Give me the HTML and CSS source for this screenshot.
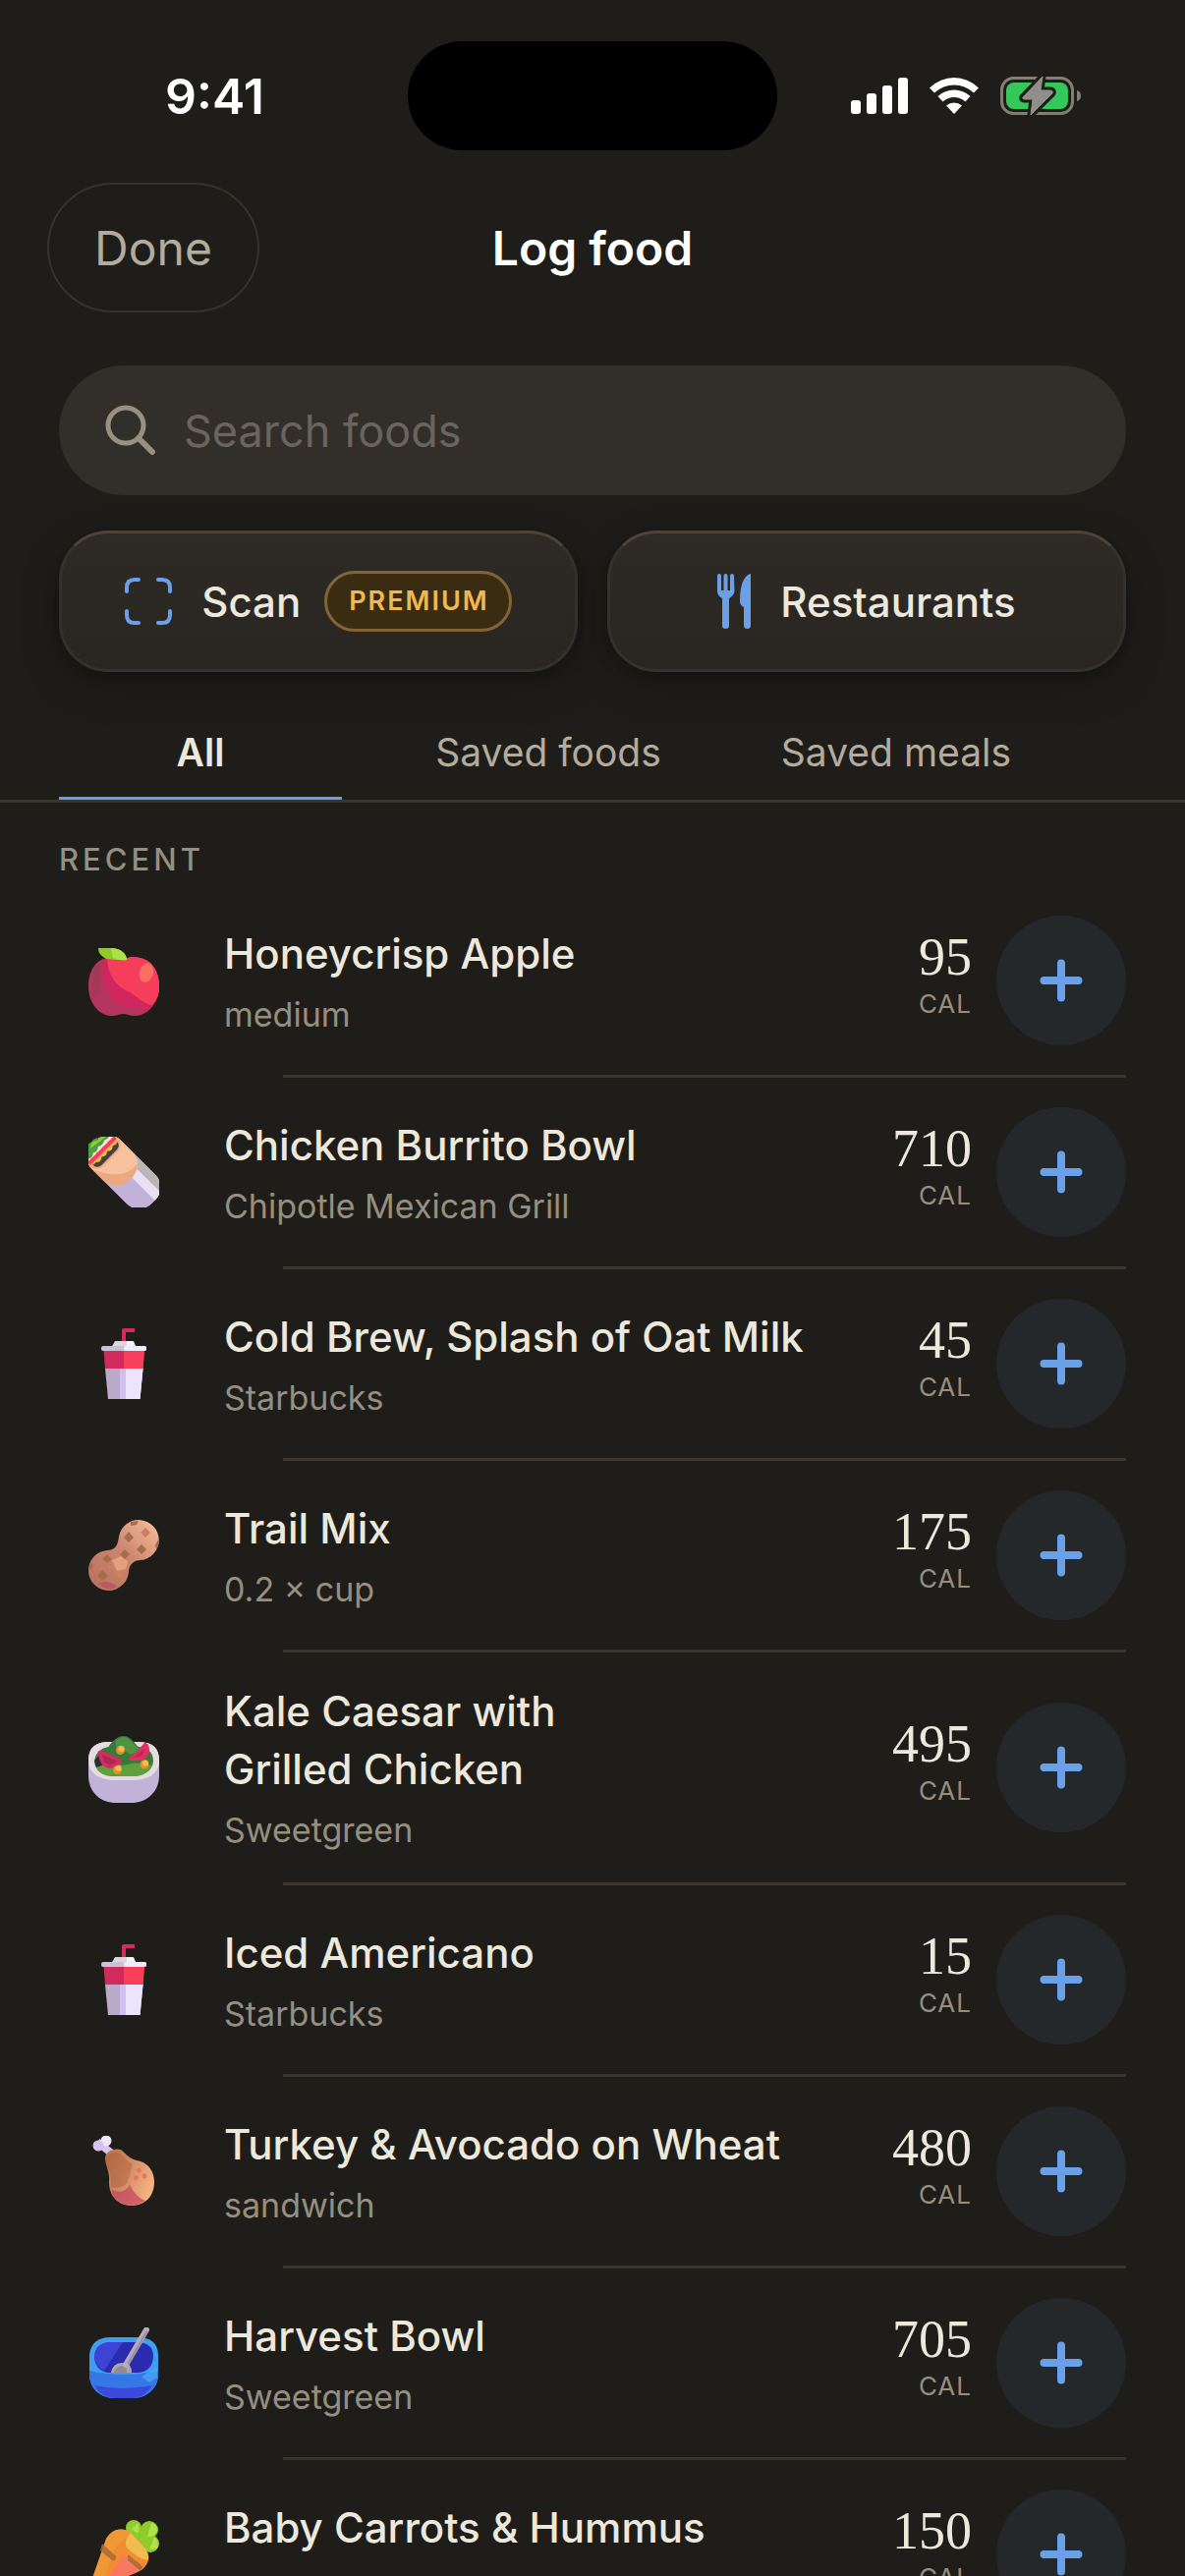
FILE: index.html
```
<!DOCTYPE html>
<html lang="en">
  <head>
    <meta charset="UTF-8" />
    <meta name="viewport" content="width=device-width, initial-scale=1.0" />
    <title>Log food</title>
    <link rel="stylesheet" href="styles.css">
  </head>

  <body>
    <!-- Shared icons -->
    <svg class="sprite" aria-hidden="true">
      <symbol id="plus" viewBox="0 0 44 44">
        <path d="M22 4.500v35M4.500 22h35" stroke="#6aa0e8" stroke-width="8" stroke-linecap="round" />
      </symbol>

      <symbol id="apple" viewBox="0 0 72 72">
        <path d="M36 14C44 11 54 12 60 16C68 21 72 31 72 42C72 58 61 72 47 72C42 72 39 70 36 70C32 70 29 72 24 72C10 72 0 58 0 42C0 25 9 13 21 13C27 13 31 14 36 14Z" fill="#b23560" />
        <path d="M17 14C24 12 30 14 36 14C44 11 54 12 60 16C68 21 72 31 72 42C72 54 66 64 58 66C46 63 34 66 25 56C16 46 11 26 17 14Z" fill="#cf265d" />
        <path d="M19 14C25 13 31 14 36 14C44 11 54 12 60 16C68 21 72 31 72 42C72 51 69 58 64 61C56 60 47 50 38 46C27 41 20 29 19 14Z" fill="#f63e5c" />
        <ellipse cx="59" cy="28" rx="7" ry="10" transform="rotate(15 59 28)" fill="#f96f61" />
        <path d="M8 20C3 30 2 44 6 54C12 52 15 34 12 18Z" fill="#a03a52" opacity=".7" />
        <path d="M10 3H23C32 3 39 8 39 15C31 16 24 14 18 14C13 11 10 8 10 3Z" fill="#91cc26" />
        <path d="M23 3C32 3 39 8 39 15C33 16 28 14 25 13Z" fill="#ace246" />
      </symbol>

      <symbol id="burrito" viewBox="0 0 72 72">
        <clipPath id="burrito-wrap">
          <rect x="15" y="-7" width="42" height="86" rx="19" />
        </clipPath>
        <g transform="rotate(-45 36 36)">
          <g clip-path="url(#burrito-wrap)">
            <rect x="15" y="-7" width="42" height="86" fill="#c2b1d8" />
            <rect x="38" y="20" width="10" height="60" fill="#e8e1f4" />
            <rect x="48" y="20" width="9" height="60" fill="#b9b6b4" />
            <path d="M15 -7H57V28Q54 46 36 46Q18 46 15 28Z" fill="#f7c29d" />
            <path d="M15 10V28Q18 46 36 46Q46 46 51 40Q28 42 15 10Z" fill="#e9aa82" />
            <rect x="15" y="-7" width="42" height="24" rx="12" fill="#eea982" />
            <rect x="19" y="4" width="34" height="11" rx="6" fill="#45413b" />
            <path d="M17 5H55V8Q51 12 47 9Q43 13 39 9Q35 13 31 9Q27 13 23 9Q19 10 17 5Z" fill="#f5b94e" />
            <path d="M18 -2H54V2Q51 5 47 2Q43 5 39 2Q35 5 31 2Q27 5 23 2Q19 4 18 -2Z" fill="#f2e9dd" />
            <rect x="17" y="3" width="38" height="4" rx="1" fill="#f5405a" />
          </g>
          <path d="M19 0Q18 -5 24 -6Q27 -11 34 -9Q41 -10 42 -6Q49 -6 53 -2Q49 2 45 -1Q40 2 36 -1Q31 3 28 0Q23 4 19 0Z" fill="#509d46" />
          <path d="M29 -5Q35 -11 39 -6Q46 -6 51 -2Q42 -3 36 -4Z" fill="#8bd02e" />
        </g>
      </symbol>

      <symbol id="cup" viewBox="0 0 72 72">
        <path d="M36 15V2H47" fill="none" stroke="#d52b5f" stroke-width="4" stroke-linejoin="round" />
        <path d="M27 13H46L49 20H23Z" fill="#dcd7df" />
        <path d="M39 13H45L48 20H39Z" fill="#f5f2fa" />
        <rect x="13" y="18" width="46" height="5" rx="2" fill="#c9c1d4" />
        <rect x="36" y="18" width="23" height="5" rx="2" fill="#f0ebf9" />
        <path d="M15.500 23H57L55.500 41H17Z" fill="#d02b5c" />
        <path d="M36 23H57L55.500 41H36Z" fill="#f73f5b" />
        <path d="M17 41H55.500L52.500 72H20Z" fill="#b9abc9" />
        <path d="M32 41H55.500L52.500 72H32Z" fill="#d2bfee" />
        <path d="M38 41H55.500L52.500 72H38Z" fill="#ece4fa" />
      </symbol>

      <symbol id="peanut" viewBox="0 0 72 72">
        <linearGradient id="peanut-shell" x1="0" y1="1" x2="1" y2="0">
          <stop offset="0" stop-color="#b56f5b" />
          <stop offset=".55" stop-color="#cf8872" />
          <stop offset="1" stop-color="#f8c199" />
        </linearGradient>
        <path d="M31 17A20.500 20.500 0 1 1 53 41C46 41 42 45 41 52A20.500 20.500 0 1 1 19 31C27 31 30 26 31 17Z" fill="url(#peanut-shell)" />
        <path d="M24 41L33 37L40 42L38 50L29 52Z" fill="#e9a981" opacity=".8" />
        <g fill="#a66c4b">
          <path d="M41 12l5 6-5 5-5-5z" />
          <path d="M54 25l5 5-5 5-5-5z" />
          <path d="M37 30l5 5-5 5-5-5z" />
          <path d="M19 35l5 5-5 4-5-4z" />
          <path d="M14 51l6 6-6 5-5-5z" />
          <path d="M43 2l8-1-2 4-6 1z" />
          <path d="M71 20l1 4-3 6-1-4z" />
          <path d="M2 44l3 2-2 5-2-1z" />
        </g>
        <path d="M58 8l5 5-5 5-5-5z" fill="#cb7f68" />
        <path d="M31 52l4 3-4 4-3-4z" fill="#cf8848" />
        <path d="M10 65Q20 60 29 68Q20 74 10 65Z" fill="#b94e66" opacity=".7" />
      </symbol>

      <symbol id="salad" viewBox="0 0 72 72">
        <path d="M0 29C0 14 9 10 22 10H50C64 10 72 15 72 29V44C72 62 58 72 44 72H28C13 72 0 62 0 44Z" fill="#c2b2d9" />
        <path d="M0 29C0 14 9 10 22 10H50C64 10 72 15 72 29C72 44 58 49 45 49H27C13 49 0 43 0 29Z" fill="#e3ddde" />
        <path d="M6 30C7 19 15 15 24 15H48C59 15 66 19 66 30C65 40 55 45 45 45H27C15 45 7 40 6 30Z" fill="#3f7a38" />
        <path d="M6 29L12 22L14 34L8 36Z" fill="#272d3c" />
        <path d="M8 36C23 30 50 30 65 34C61 42 53 45 45 45H27C17 45 11 42 8 36Z" fill="#609f3d" />
        <path d="M13 22C21 18 24 4 36 4C45 4 49 17 58 20L50 31L35 34L22 28Z" fill="#39793a" />
        <path d="M28 9Q36 1 43 9Q50 16 54 19L42 23Q35 16 28 15Z" fill="#509443" />
        <path d="M10 22Q9 18 14 19L32 27Q37 31 31 33Q24 40 16 35Q11 31 10 22Z" fill="#d62a60" />
        <path d="M14 23L30 30Q23 36 17 31Q14 28 14 23Z" fill="#ae2856" />
        <path d="M41 27Q44 23 49 20L57 11Q61 10 62 17Q62 28 50 29Q42 30 41 27Z" fill="#e42d61" />
        <path d="M46 26L57 17Q57 26 46 26Z" fill="#b92959" />
        <g fill="#df9030">
          <circle cx="32.500" cy="18.500" r="4.500" />
          <circle cx="29.500" cy="38.500" r="4.500" />
          <circle cx="57" cy="33" r="4.500" />
        </g>
        <g fill="#f5bd4c">
          <circle cx="33.500" cy="17" r="3" />
          <circle cx="30.500" cy="37" r="3" />
          <circle cx="58" cy="31.500" r="3" />
        </g>
      </symbol>

      <symbol id="drumstick" viewBox="0 0 72 72">
        <linearGradient id="drumstick-meat" x1="0" y1="0" x2="1" y2=".5">
          <stop offset="0" stop-color="#b87048" />
          <stop offset=".45" stop-color="#cf8560" />
          <stop offset="1" stop-color="#f3b080" />
        </linearGradient>
        <path d="M9 6L14 10L25 19" fill="none" stroke="#d8c7ec" stroke-width="8" />
        <circle cx="18" cy="5" r="5.500" fill="#eee7f7" />
        <circle cx="10" cy="10" r="5.500" fill="#d6c2ed" />
        <path d="M17 23C17 16 26 12 33 14C39 19 42 24 53 26C62 29 67 37 67 47C67 62 57 71 44 71C30 71 21 61 21 47C22 37 18 33 17 23Z" fill="url(#drumstick-meat)" />
        <path d="M23 55Q36 60 42 50Q48 62 58 66Q44 75 31 67Q25 62 23 55Z" fill="#c23c60" opacity=".65" />
        <path d="M18 22Q24 15 32 18Q39 25 45 29L40 47Q34 55 23 52Q24 37 19 31Z" fill="#a55c35" opacity=".4" />
        <g fill="#e6785f">
          <circle cx="51.500" cy="35" r="2.500" />
          <circle cx="57" cy="41" r="2.500" />
          <circle cx="48.500" cy="42.500" r="2.500" />
        </g>
      </symbol>

      <symbol id="bowl" viewBox="0 0 72 72">
        <path d="M1 28C2 16 10 10 22 10H50C63 10 71 16 71 28V48C71 62 59 72 45 72H27C13 72 1 63 1 48Z" fill="#3e9ff0" />
        <path d="M1 44Q35 52 71 44V48C71 62 59 72 45 72H27C13 72 1 63 1 48Z" fill="#3477e5" />
        <path d="M6 59Q33 65 65 59C59 68 53 72 45 72H27C18 72 11 67 6 59Z" fill="#3c4adb" />
        <path d="M6 29C7 20 13 15 23 15H49C60 15 66 20 66 29C66 39 60 46 50 46H22C11 46 6 38 6 29Z" fill="#2b2baf" />
        <path d="M6 29C7 20 13 15 23 15H35L16 44Q6 39 6 29Z" fill="#3c43d5" />
        <path d="M23 46Q25 35 36 36Q44 36 44 46Z" fill="#aaa5b0" />
        <path d="M26 46Q28 39 35 39Q40 40 39 46Z" fill="#8f8b91" />
        <path d="M38 38L59 2.500" stroke="#b7abbd" stroke-width="6" stroke-linecap="round" />
        <path d="M40 37L60 3.500" stroke="#968f98" stroke-width="2" />
        <path d="M54 50Q64 44 70 41V51L62 56Z" fill="#48aef8" opacity=".7" />
      </symbol>

      <symbol id="carrot" viewBox="0 0 72 72">
        <g fill="#91ca2d">
          <circle cx="46" cy="9" r="8" />
          <circle cx="62" cy="11" r="9" />
          <circle cx="63" cy="25" r="9" />
          <path d="M42 15L56 6L66 22L59 33Z" />
        </g>
        <path d="M51 4Q52 10 50 15L44 10Z M64 4Q70 5 70 12Q67 19 60 18Z M67 18Q72 23 70 30L62 31Z" fill="#ade248" />
        <path d="M17 23C21 11 34 7 43 14L58 30C65 39 60 50 50 54L7 72H0Z" fill="#f28c31" />
        <path d="M17 23C21 11 34 7 43 14L28 28L12 71L0 72Z" fill="#ef9835" />
        <path d="M43 14L58 30Q61 35 61 42Q49 40 38 28Q37 20 43 14Z" fill="#f0bc52" />
        <path d="M36 36Q49 48 58 47Q53 53 45 56L9 71Q26 52 36 36Z" fill="#fa7862" />
        <path d="M14 25L28 38Q29 43 24 42L12 32ZM40 36L54 47Q56 51 52 52L40 42Z" fill="#a76a38" opacity=".85" />
      </symbol>
    </svg>

    <div class="app">
      <div class="status-bar">
        <div class="status-time">9:41</div>
        <div class="island"></div>
        <div class="status-icons">
          <svg width="58" height="37" viewBox="0 0 58 37" fill="#fff" role="img" aria-label="Signal">
            <rect x="0" y="23" width="10" height="14" rx="3" />
            <rect x="16" y="16" width="10" height="21" rx="3" />
            <rect x="32" y="8" width="10" height="29" rx="3" />
            <rect x="48" y="0" width="10" height="37" rx="3" />
          </svg>
          <svg width="50" height="37" viewBox="0 0 50 37" fill="#fff" role="img" aria-label="Wi-Fi">
            <path d="M0 10.500Q11 0 25 0T50 10.500L45 15.500Q36 7.500 25 7.500T5 15.500Z" />
            <path d="M8.500 19Q15.500 12.500 25 12.500T41.500 19L36.500 24.500Q31.500 20 25 20T13.500 24.500Z" />
            <path d="M17 28.500Q20.500 25.500 25 25.500T33 28.500L25 37Z" />
          </svg>
          <svg width="82" height="43" viewBox="0 -2 82 43" role="img" aria-label="Battery charging">
            <rect x="1.500" y="1.500" width="72" height="36" rx="12" fill="none" stroke="#847d76" stroke-width="3" />
            <path d="M78 14Q82 15 82 19.500T78 25Z" fill="#847d76" />
            <rect x="6" y="6" width="63" height="27" rx="8" fill="#34c759" />
            <path d="M43 0L23 21Q22 23 25 23H33L31 39L53 17Q54 14 51 14H41Z" fill="#8f8e8b" stroke="#1e1d19" stroke-width="7" stroke-linejoin="round" />
            <path d="M43 0L23 21Q22 23 25 23H33L31 39L53 17Q54 14 51 14H41Z" fill="#8f8e8b" stroke="#8f8e8b" stroke-width="1" stroke-linejoin="round" />
          </svg>
        </div>
      </div>

      <header class="header">
        <button class="done" type="button">Done</button>
        <h1>Log food</h1>
      </header>

      <label class="search">
        <svg width="52" height="52" viewBox="0 0 52 52" fill="none" stroke="#989080" stroke-width="5" stroke-linecap="round" aria-hidden="true">
          <circle cx="21" cy="21" r="18" />
          <path d="M34 34L48 48" stroke-width="6" />
        </svg>
        <input type="text" placeholder="Search foods" aria-label="Search foods" />
      </label>

      <div class="actions">
        <button class="action" type="button">
          <svg width="48" height="48" viewBox="0 0 48 48" fill="none" stroke="#6aa0e8" stroke-width="4" stroke-linecap="round" aria-hidden="true">
            <path d="M2 14V10Q2 2 10 2H14M34 2H38Q46 2 46 10V14M46 34V38Q46 46 38 46H34M14 46H10Q2 46 2 38V34" />
          </svg>
          Scan
          <span class="premium">PREMIUM</span>
        </button>
        <button class="action" type="button">
          <svg width="34" height="56" viewBox="0 0 34 56" fill="#6aa0e8" aria-hidden="true">
            <path d="M0 2Q0 0 2 0T4 2V17H6.500V2Q6.500 0 8.500 0T10.500 2V17H13V2Q13 0 15 0T17 2L17.500 18Q17 22 12 25V53Q12 56 8.500 56T5 53V25Q0 22 0 18Z" />
            <path d="M34 0V53Q34 56 30.500 56T27 53V34Q23 32 23 28Q23 3 34 0Z" />
          </svg>
          Restaurants
        </button>
      </div>

      <nav class="tabs" role="tablist">
        <button class="tab active" type="button" role="tab" aria-selected="true">All</button>
        <button class="tab" type="button" role="tab" aria-selected="false">Saved foods</button>
        <button class="tab" type="button" role="tab" aria-selected="false">Saved meals</button>
      </nav>

      <main class="content">
        <h2>RECENT</h2>
        <ul class="foods">
          <li>
            <div class="food">
              <svg class="food-icon"><use href="#apple" /></svg>
              <div class="food-text">
                <div class="food-name">Honeycrisp Apple</div>
                <div class="food-note">medium</div>
              </div>
              <div class="cal"><b>95</b><span>CAL</span></div>
              <button class="add" type="button" aria-label="Add Honeycrisp Apple"><svg><use href="#plus" /></svg></button>
            </div>
          </li>
          <li>
            <div class="food">
              <svg class="food-icon"><use href="#burrito" /></svg>
              <div class="food-text">
                <div class="food-name">Chicken Burrito Bowl</div>
                <div class="food-note">Chipotle Mexican Grill</div>
              </div>
              <div class="cal"><b>710</b><span>CAL</span></div>
              <button class="add" type="button" aria-label="Add Chicken Burrito Bowl"><svg><use href="#plus" /></svg></button>
            </div>
          </li>
          <li>
            <div class="food">
              <svg class="food-icon"><use href="#cup" /></svg>
              <div class="food-text">
                <div class="food-name">Cold Brew, Splash of Oat Milk</div>
                <div class="food-note">Starbucks</div>
              </div>
              <div class="cal"><b>45</b><span>CAL</span></div>
              <button class="add" type="button" aria-label="Add Cold Brew"><svg><use href="#plus" /></svg></button>
            </div>
          </li>
          <li>
            <div class="food">
              <svg class="food-icon"><use href="#peanut" /></svg>
              <div class="food-text">
                <div class="food-name">Trail Mix</div>
                <div class="food-note">0.2 × cup</div>
              </div>
              <div class="cal"><b>175</b><span>CAL</span></div>
              <button class="add" type="button" aria-label="Add Trail Mix"><svg><use href="#plus" /></svg></button>
            </div>
          </li>
          <li>
            <div class="food">
              <svg class="food-icon"><use href="#salad" /></svg>
              <div class="food-text">
                <div class="food-name">Kale Caesar with<br />Grilled Chicken</div>
                <div class="food-note">Sweetgreen</div>
              </div>
              <div class="cal"><b>495</b><span>CAL</span></div>
              <button class="add" type="button" aria-label="Add Kale Caesar with Grilled Chicken"><svg><use href="#plus" /></svg></button>
            </div>
          </li>
          <li>
            <div class="food">
              <svg class="food-icon"><use href="#cup" /></svg>
              <div class="food-text">
                <div class="food-name">Iced Americano</div>
                <div class="food-note">Starbucks</div>
              </div>
              <div class="cal"><b>15</b><span>CAL</span></div>
              <button class="add" type="button" aria-label="Add Iced Americano"><svg><use href="#plus" /></svg></button>
            </div>
          </li>
          <li>
            <div class="food">
              <svg class="food-icon"><use href="#drumstick" /></svg>
              <div class="food-text">
                <div class="food-name">Turkey &amp; Avocado on Wheat</div>
                <div class="food-note">sandwich</div>
              </div>
              <div class="cal"><b>480</b><span>CAL</span></div>
              <button class="add" type="button" aria-label="Add Turkey &amp; Avocado on Wheat"><svg><use href="#plus" /></svg></button>
            </div>
          </li>
          <li>
            <div class="food">
              <svg class="food-icon"><use href="#bowl" /></svg>
              <div class="food-text">
                <div class="food-name">Harvest Bowl</div>
                <div class="food-note">Sweetgreen</div>
              </div>
              <div class="cal"><b>705</b><span>CAL</span></div>
              <button class="add" type="button" aria-label="Add Harvest Bowl"><svg><use href="#plus" /></svg></button>
            </div>
          </li>
          <li>
            <div class="food">
              <svg class="food-icon"><use href="#carrot" /></svg>
              <div class="food-text">
                <div class="food-name">Baby Carrots &amp; Hummus</div>
                <div class="food-note">&nbsp;</div>
              </div>
              <div class="cal"><b>150</b><span>CAL</span></div>
              <button class="add" type="button" aria-label="Add Baby Carrots &amp; Hummus"><svg><use href="#plus" /></svg></button>
            </div>
          </li>
        </ul>
      </main>
    </div>
  </body>
</html>
```
FILE: styles.css
```
* {
  box-sizing: border-box;
}

body {
  margin: 0;
  background-color: #1e1d19;
  color: #ece8dc;
  font-family: Inter, "Liberation Sans", sans-serif;
}

button,
input {
  font-family: inherit;
  border: none;
  background: none;
  padding: 0;
}

button {
  cursor: pointer;
}

.sprite {
  position: absolute;
  width: 0;
  height: 0;
}

.app {
  display: flex;
  flex-direction: column;
  height: 100vh;
}

/* Status bar */
.status-bar {
  display: grid;
  grid-template-columns: 1fr 376px 1fr;
  align-items: center;
  padding: 42px 0 33px;
}

.status-time {
  padding-left: 22px;
  color: #fff;
  font-size: 50px;
  font-weight: 600;
  line-height: 60px;
  text-align: center;
}

.island {
  height: 111px;
  border-radius: 56px;
  background-color: #000;
}

.status-icons {
  display: flex;
  align-items: center;
  justify-content: center;
  gap: 22px;
  padding-right: 32px;
}

/* Header */
.header {
  display: grid;
  grid-template-columns: 1fr auto 1fr;
  align-items: center;
  padding: 0 48px;
}

.done {
  justify-self: start;
  width: 216px;
  height: 132px;
  border: 2px solid #35332e;
  border-radius: 66px;
  color: #b3ab9c;
  font-size: 48px;
}

h1 {
  margin: 0;
  color: #fff;
  font-size: 48px;
  font-weight: 600;
}

/* Search */
.search {
  display: flex;
  align-items: center;
  gap: 28px;
  height: 132px;
  margin: 54px 60px 36px;
  padding: 0 47px;
  border-radius: 66px;
  background-color: #322e2a;
}

.search input {
  flex: 1;
  min-width: 0;
  color: #ece8dc;
  font-size: 45px;
  outline: none;
}

.search input::placeholder {
  color: #69645d;
  opacity: 1;
}

/* Scan / Restaurants */
.actions {
  display: grid;
  grid-template-columns: 1fr 1fr;
  gap: 30px;
  padding: 0 60px;
}

.action {
  display: flex;
  align-items: center;
  justify-content: center;
  gap: 30px;
  height: 144px;
  border: 3px solid #34312c;
  border-top-color: #4c4438;
  border-radius: 50px;
  background: linear-gradient(#2e2b26, #292621);
  box-shadow: 0 14px 44px rgba(0, 0, 0, 0.2), 0 4px 16px rgba(0, 0, 0, 0.25);
  color: #ece8dc;
  font-size: 42px;
  font-weight: 500;
}

.premium {
  margin-left: -6px;
  padding: 12px 20px 12px 22px;
  border: 3px solid #836435;
  border-radius: 32px;
  background-color: #3a2b13;
  color: #f0b950;
  font-size: 27px;
  font-weight: 600;
  line-height: 32px;
  letter-spacing: 2px;
}

/* Tabs */
.tabs {
  display: grid;
  grid-template-columns: repeat(3, 1fr);
  gap: 66px;
  padding: 58px 150px 0 60px;
  border-bottom: 3px solid #3a342f;
}

.tab {
  padding-bottom: 21px;
  border-bottom: 3px solid #1e1d19;
  border-radius: 3px 3px 0 0;
  color: #b3ab9c;
  font-size: 39px;
  line-height: 48px;
  white-space: nowrap;
}

.tab.active {
  border-bottom-color: #6aa0e8;
  color: #ece8dc;
  font-weight: 600;
}

/* Food list */
.content {
  flex: 1;
  min-height: 0;
  padding: 0 60px;
  overflow: auto;
  scrollbar-width: none;
}

h2 {
  margin: 0;
  padding: 39px 0 8px;
  color: #958f80;
  font-size: 31px;
  font-weight: 500;
  line-height: 38px;
  letter-spacing: 4px;
}

.foods {
  margin: 0;
  padding: 0;
  list-style: none;
}

.foods li::after {
  content: "";
  display: block;
  height: 3px;
  margin-left: 228px;
  background-color: #3a342f;
}

.food {
  display: flex;
  align-items: center;
  min-height: 192px;
  padding: 30px 0;
}

.food-icon {
  flex: none;
  width: 72px;
  height: 72px;
  margin: 0 66px 0 30px;
}

.food-text {
  flex: 1;
}

.food-name {
  font-size: 42px;
  font-weight: 500;
  line-height: 59px;
}

.food-note {
  margin-top: 10px;
  color: #958f80;
  font-size: 34px;
  line-height: 46px;
}

.cal {
  display: flex;
  flex-direction: column;
  align-items: flex-end;
  gap: 4px;
  margin-right: 25px;
  padding-bottom: 10px;
}

.cal b {
  font-family: "Liberation Serif", serif;
  font-size: 54px;
  font-weight: 400;
  line-height: 54px;
}

.cal span {
  color: #958f80;
  font-size: 26px;
  line-height: 34px;
  letter-spacing: 1px;
}

.add {
  display: flex;
  align-items: center;
  justify-content: center;
  width: 132px;
  height: 132px;
  border-radius: 50%;
  background-color: #24282a;
}

.add svg {
  width: 44px;
  height: 44px;
}
```
